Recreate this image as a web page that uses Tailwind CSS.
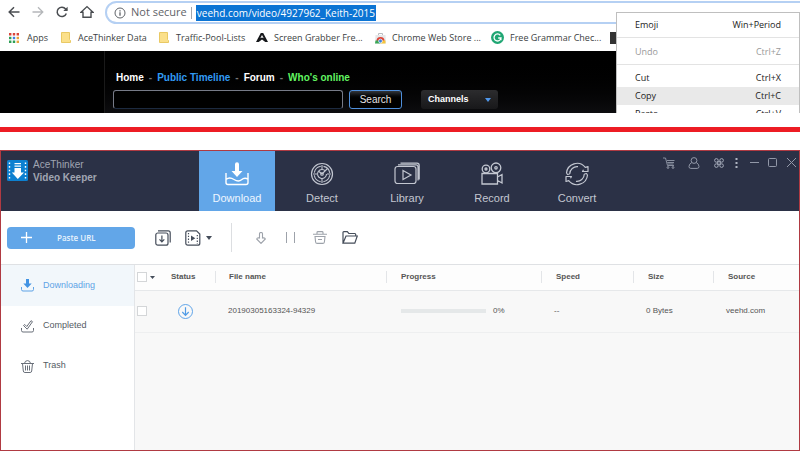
<!DOCTYPE html>
<html lang="en">
  <head>
    <meta charset="UTF-8" />
    <meta name="viewport" content="width=device-width, initial-scale=1.0" />
    <title>AceThinker Video Keeper</title>
    <script src="https://cdn.jsdelivr.net/npm/@tailwindcss/browser@4"></script>
  </head>
  <body class="flex min-h-screen flex-col bg-white font-['Liberation_Sans',sans-serif]">
    <!-- Browser -->
    <section class="relative overflow-hidden font-['Open_Sans',sans-serif]">
      <!-- Address row -->
      <div class="flex h-6 items-center overflow-hidden text-[#5f6368]">
        <div class="flex w-[105px] shrink-0 items-center gap-3 pl-2">
          <button aria-label="Back">
            <svg class="size-3" viewBox="0 0 12 12" fill="none" stroke="#4a4d51" stroke-width="1.5"><path d="M11.5 6H1.5M6 1.2L1.2 6 6 10.8" /></svg>
          </button>
          <button aria-label="Forward">
            <svg class="size-3" viewBox="0 0 12 12" fill="none" stroke="#b5b7ba" stroke-width="1.3"><path d="M.5 6h10M6 1.2L10.8 6 6 10.8" /></svg>
          </button>
          <button aria-label="Reload">
            <svg class="size-3" viewBox="0 0 12 12" fill="none" stroke="#4a4d51" stroke-width="1.5"><path d="M10.3 7.5A4.7 4.7 0 1 1 9.6 3L11 4.4" /><path d="M11.6 .8v4.3H7.3z" fill="#4a4d51" stroke="none" /></svg>
          </button>
          <button aria-label="Home">
            <svg class="size-3.5" viewBox="0 0 14 14" fill="none" stroke="#4a4d51" stroke-width="1.4"><path d="M1 7.3L7 1.6l6 5.7H11v5H3v-5z" /></svg>
          </button>
        </div>
        <div class="-mr-4 mt-px flex h-[23px] flex-1 items-center rounded-full border-2 border-[#b5d0f3] pl-[7px]">
          <svg class="size-3" viewBox="0 0 12 12" fill="none" stroke="#5f6368"><circle cx="6" cy="6" r="5" /><path d="M6 5.3v3.4M6 3.2v1.2" stroke-width="1.3" /></svg>
          <span class="ml-[5px] text-[11px]">Not secure</span>
          <span class="mx-1 h-3 w-px bg-[#a5a8ac]"></span>
          <a href="#" class="bg-[#0b74d4] px-px text-[10px] leading-4 text-white">veehd.com/video/4927962_Keith-2015</a>
        </div>
      </div>

      <!-- Bookmarks -->
      <nav class="flex h-[27px] items-center overflow-hidden whitespace-nowrap text-[9px] text-[#3c3f43]">
        <a href="#" class="flex w-[52px] shrink-0 items-center gap-2 pl-[9px]">
          <svg class="size-[10px] shrink-0" viewBox="0 0 10 10"><path d="M0 0h2.4v2.4H0zM3.8 0h2.4v2.4H3.8zM7.6 0H10v2.4H7.6z" fill="#d9453b" /><path d="M0 3.8h2.4v2.4H0z" fill="#2e9f56" /><path d="M3.8 3.8h2.4v2.4H3.8z" fill="#3f7fe0" /><path d="M7.6 3.8H10v2.4H7.6z" fill="#e8a33b" /><path d="M0 7.6h2.4V10H0zM3.8 7.6h2.4V10H3.8z" fill="#2e9f56" /><path d="M7.6 7.6H10V10H7.6z" fill="#e8a33b" /></svg>
          Apps
        </a>
        <a href="#" class="ml-[9px] flex w-[98px] shrink-0 items-center gap-[7px]">
          <svg class="h-[11px] w-[10px] shrink-0" viewBox="0 0 10 11"><path d="M.5.5h8v7l1 1v2H.5z" fill="#fbe08b" stroke="#e9c964" /></svg>
          AceThinker Data
        </a>
        <a href="#" class="flex w-[97px] shrink-0 items-center gap-[7px]">
          <svg class="h-[11px] w-[10px] shrink-0" viewBox="0 0 10 11"><path d="M.5.5h8v7l1 1v2H.5z" fill="#fbe08b" stroke="#e9c964" /></svg>
          Traffic-Pool-Lists
        </a>
        <a href="#" class="flex w-[119px] shrink-0 items-center gap-[6px]">
          <svg class="h-[9px] w-3 shrink-0" viewBox="0 0 12 9"><path d="M4.800 0h2.400L12 9H9.300L6 6.500 2.700 9H0zM6 2L4.300 5.300 6 4.400l1.700.9z" fill="#16181b" fill-rule="evenodd" /></svg>
          Screen Grabber Fre...
        </a>
        <a href="#" class="flex w-[116px] shrink-0 items-center gap-[6px]">
          <svg class="h-3 w-[11px] shrink-0" viewBox="0 0 11 12"><path d="M3.5 3V1.5h4V3" fill="none" stroke="#b9bcc0" /><path d="M.5 3h10l.5 8.5H0z" fill="#e6e7e9" /><path d="M1.5 9a4 4 0 0 1 8 0z" fill="#dc4437" /><path d="M.5 8.5h5v3H0z" fill="#3aa757" /><path d="M5.5 8.5h5v3h-5z" fill="#f5c63c" /><circle cx="5.5" cy="9" r="1.9" fill="#3d7de0" stroke="#fff" stroke-width=".7" /></svg>
          Chrome Web Store ...
        </a>
        <a href="#" class="flex w-[119px] shrink-0 items-center gap-[6px]">
          <svg class="size-[13px] shrink-0" viewBox="0 0 13 13"><circle cx="6.5" cy="6.5" r="6.5" fill="#1fa673" /><path d="M9.3 4.3A3.5 3.5 0 1 0 10 7H7.2M9.9 7v2.3" fill="none" stroke="#fff" stroke-width="1.3" /></svg>
          Free Grammar Chec...
        </a>
        <span class="h-3 w-3 shrink-0 bg-[#333]"></span>
      </nav>

      <!-- Web page -->
      <div class="flex bg-black font-['Liberation_Sans',sans-serif]">
        <div class="w-[104px] shrink-0"></div>
        <div class="flex h-[62px] flex-1 flex-col gap-[6px] border-l border-[#1a1a1a] bg-linear-to-b from-black to-[#0d0d0f] pt-[21px] pl-2">
          <nav class="flex gap-[5px] pl-[3px] text-[10px] leading-3 font-bold text-[#777]">
            <a href="#" class="text-white">Home</a> -
            <a href="#" class="text-[#319bf5]">Public Timeline</a> -
            <a href="#" class="text-white">Forum</a> -
            <a href="#" class="text-[#62f562]">Who's online</a>
          </nav>
          <form class="flex items-center">
            <input type="text" aria-label="Search videos" class="h-[19px] w-[230px] rounded-[3px] border border-[#777b88] border-b-[#1c2a40] bg-black px-1 text-[10px] text-white" />
            <button type="button" class="ml-[6px] h-[19px] w-[53px] rounded-[3px] border border-[#4f8fdb] bg-linear-to-b from-[#33363b] via-black to-black text-[10px] text-[#e5e5e5]">Search</button>
            <button type="button" class="ml-[19px] flex h-[19px] w-[77px] items-center justify-between rounded-[3px] bg-linear-to-b from-[#2c2c2e] to-[#18181a] px-[7px] text-[9px] font-bold text-white">
              Channels
              <svg class="h-1 w-[6px]" viewBox="0 0 6 4"><path d="M0 0h6L3 4z" fill="#4f97ec" /></svg>
            </button>
          </form>
        </div>
      </div>

      <!-- Context menu -->
      <div class="absolute top-3 right-0 bottom-0 w-[184px] overflow-hidden border border-b-0 border-[#bfbfbf] bg-white pt-[3px] text-[9px] leading-[18px] text-[#222]">
        <button class="flex w-full justify-between px-[18px]"><span>Emoji</span><span>Win+Period</span></button>
        <hr class="mt-[3px] mb-[5px] border-[#e3e3e3]" />
        <button class="flex w-full justify-between px-[18px] text-[#999]" disabled><span>Undo</span><span>Ctrl+Z</span></button>
        <hr class="mt-[3px] mb-1 border-[#e3e3e3]" />
        <button class="flex w-full justify-between px-[18px]"><span>Cut</span><span>Ctrl+X</span></button>
        <button class="flex w-full justify-between bg-[#e9e9e9] px-[18px]"><span>Copy</span><span>Ctrl+C</span></button>
        <button class="flex w-full justify-between px-[18px]"><span>Paste</span><span>Ctrl+V</span></button>
      </div>
    </section>

    <div class="mt-[14px] mb-[18px] h-[5px] bg-[#ed1c24]"></div>

    <!-- Video Keeper -->
    <main class="mb-px flex flex-1 flex-col border border-[#b03a42]">
      <header class="flex h-[60px] bg-[#2b3146]">
        <div class="flex w-[198px] shrink-0 gap-[5px] pt-[7px] pl-[6px]">
          <svg class="mt-[2px] size-[21px]" viewBox="0 0 21 21"><rect width="21" height="21" rx="1.5" fill="#0d80d0" /><path d="M2.5 2.5v17M18.5 2.5v17" stroke="#fff" stroke-width="1.4" stroke-dasharray="1.6 2" /><path d="M7.500 3h6.500v1.300h-6.500zM7.500 5.500h6.500v1.300h-6.500zM7.500 8h6.500v4.500h3L10.800 19 4.800 12.500h2.700z" fill="#fff" /></svg>
          <div class="text-[10px] leading-[13px] text-[#a0a5b2]">
            <p>AceThinker</p>
            <p class="font-bold">Video Keeper</p>
          </div>
        </div>
        <nav class="flex gap-[9px] text-[11px] leading-[13px] text-[#c3c7d1]">
          <a href="#" class="flex w-[76px] flex-col items-center gap-[6px] bg-[#62a6e8] pt-[11px] text-[#eef6ff]">
            <svg class="h-6 w-6" viewBox="0 0 24 24" fill="none" stroke="#fff" stroke-width="1.4"><path d="M10 2.200a2 2 0 0 1 4 0V9h3.500L12 15 6.500 9H10z" fill="#fff" stroke="none" /><path d="M1 11v9.500q0 2 2 2h18q2 0 2-2V11M1 17.500q3.500-3 8 0t7.500.3 6.500-.6" /></svg>
            Download
          </a>
          <a href="#" class="flex w-[76px] flex-col items-center gap-[6px] pt-[11px]">
            <svg class="h-6 w-6" viewBox="0 0 24 24" fill="none" stroke="#c3c7d1" stroke-width="1.100"><circle cx="12" cy="12" r="10.500" stroke-width="1.200" /><circle cx="12" cy="12" r="7.800" stroke-dasharray="9.500 2.750" stroke-dashoffset="-1.300" /><path d="M15.500 9.200A4.500 4.500 0 1 0 16.500 12M12 3v4M12 17v4M3 12h4M17 12h4M12 12l5.500-5.500M9 9.500l3 2.500" /><circle cx="12" cy="12" r="1.300" /></svg>
            Detect
          </a>
          <a href="#" class="flex w-[76px] flex-col items-center gap-[6px] pt-[11px]">
            <svg class="h-6 w-[26px]" viewBox="0 0 26 24" fill="none" stroke="#c3c7d1" stroke-width="1.200"><rect x="1" y="4.500" width="21" height="17" rx="2.500" /><path d="M4 2.800h18q2 0 2 2V18.500M6.500 1.200H23q2.200 0 2.200 2.200v14M9 8.500v9l8-4.500z" /></svg>
            Library
          </a>
          <a href="#" class="flex w-[76px] flex-col items-center gap-[6px] pt-[11px]">
            <svg class="h-6 w-6" viewBox="0 0 24 24" fill="none" stroke="#c3c7d1" stroke-width="1.300"><circle cx="6" cy="7" r="3.800" /><circle cx="16" cy="5.800" r="4.800" /><circle cx="6" cy="7" r="1" /><circle cx="16" cy="5.800" r="1.200" /><path d="M2 11.500h15.500v10.500H2zM17.500 15l4.500-2.500v8.500l-4.500-2.500" /></svg>
            Record
          </a>
          <a href="#" class="flex w-[76px] flex-col items-center gap-[6px] pt-[11px]">
            <svg class="h-6 w-6" viewBox="0 0 24 24" fill="none" stroke="#c3c7d1" stroke-width="1.200" stroke-linejoin="round"><path d="M1.500 11A10.600 10.600 0 0 1 20.300 5.300L23 4.500v5h-5.500l1-1.800" /><path d="M22.500 13A10.600 10.600 0 0 1 3.700 18.700L1 19.500v-5h5.500l-1 1.800" /><path d="M4.700 12A7.400 7.400 0 0 1 13 4.700M19.300 12A7.400 7.400 0 0 1 11 19.300M1.500 11l1 1.500 2.200-.5M22.500 13l-1-1.500-2.200.5" /></svg>
            Convert
          </a>
        </nav>
        <div class="ml-auto flex h-[23px] items-center pr-[2px]">
          <button aria-label="Cart" class="w-[25px]"><svg class="size-3" viewBox="0 0 12 12" fill="none" stroke="#9298a8"><path d="M0 1h2.500l2 7.500H11M4 3.500h7.500M4.300 5.500H11M4.800 7h5.700" stroke-width=".9" /><circle cx="5" cy="10.500" r=".9" /><circle cx="10" cy="10.500" r=".9" /></svg></button>
          <button aria-label="Account" class="w-[26px]"><svg class="size-3" viewBox="0 0 12 12" fill="none" stroke="#9298a8"><circle cx="6" cy="3.500" r="2.900" /><path d="M3.800 5.500Q1 7 1 9.500 1 11.400 2.800 11.400h6.400Q11 11.400 11 9.500 11 7 8.200 5.500" /></svg></button>
          <button aria-label="Skin" class="w-[21px]"><svg class="size-[10px]" viewBox="0 0 10 10" fill="none" stroke="#a3a9b8"><path d="M3.700 3.700h2.600v2.600H3.700z" /><circle cx="2.400" cy="2.400" r="1.800" /><circle cx="7.600" cy="2.400" r="1.800" /><circle cx="2.400" cy="7.600" r="1.800" /><circle cx="7.600" cy="7.600" r="1.800" /></svg></button>
          <button aria-label="More" class="w-[15px]"><svg class="h-[10px] w-[3px]" viewBox="0 0 3 10" fill="#b0b5c2"><path d="M.5 0h2v2h-2zM.5 4h2v2h-2zM.5 8h2v2h-2z" /></svg></button>
          <button aria-label="Minimize" class="w-[18px]"><svg class="h-[9px] w-[9px]" viewBox="0 0 9 9" stroke="#9298a8"><path d="M0 4.500h9" /></svg></button>
          <button aria-label="Maximize" class="w-[19px]"><svg class="size-[9px]" viewBox="0 0 9 9" fill="none" stroke="#9298a8"><rect x=".5" y=".5" width="8" height="8" rx="1" /></svg></button>
          <button aria-label="Close" class="w-[10px]"><svg class="size-[9px]" viewBox="0 0 9 9" stroke="#9298a8"><path d="M0 0l9 9M9 0L0 9" /></svg></button>
        </div>
      </header>

      <!-- Toolbar -->
      <div class="flex h-[54px] items-center border-b border-[#dfe1e4] pl-[6px]">
        <button class="flex h-[22px] w-32 items-center rounded-[4px] bg-[#62a6e8] pl-[14px] font-['Open_Sans',sans-serif] text-[8px] font-semibold text-[#e6f2fd]">
          <svg class="mr-[25px] size-[11px]" viewBox="0 0 11 11" stroke="#fff" stroke-width="1.300"><path d="M5.500 0v11M0 5.500h11" /></svg>
          Paste URL
        </button>
        <button aria-label="Batch download" class="ml-5"><svg class="size-4" viewBox="0 0 16 16" fill="none" stroke="#454d5a" stroke-width="1.200"><rect x=".8" y="3" width="12.200" height="12.200" rx="2" /><path d="M3 .8h10.200q2 0 2 2V12.500M6.900 5.500v6M4.500 9.300l2.400 2.500 2.400-2.500" /></svg></button>
        <button aria-label="Convert options" class="ml-[14px] flex items-center gap-[5px]">
          <svg class="size-4" viewBox="0 0 16 16" fill="none" stroke="#454d5a" stroke-width="1.200"><path d="M2.800.8h8.700l3.300 3.300v9.100q0 2-2 2H2.800q-2 0-2-2V2.800q0-2 2-2z" /><path d="M3.500 3v11M12.300 5v9" stroke-dasharray="1.300 1.500" /><path d="M6 5.500v5.500l4.300-2.800z" fill="#454d5a" stroke="none" /></svg>
          <svg class="h-1 w-[6px]" viewBox="0 0 6 4"><path d="M0 0h6L3 4z" fill="#454d5a" /></svg>
        </button>
        <span class="mx-[19px] h-[29px] w-px bg-[#dcdee1]"></span>
        <button aria-label="Start" class="ml-[5px]"><svg class="h-3 w-[10px]" viewBox="0 0 10 12" fill="none" stroke="#9da2aa" stroke-width="1.100"><path d="M3.500 6V1.800q0-1.300 1.500-1.300t1.500 1.300V6Q9 5.500 9.300 7L5 11.400.7 7Q1 5.500 3.500 6z" /></svg></button>
        <button aria-label="Pause" class="ml-5"><svg class="h-[11px] w-[9px]" viewBox="0 0 9 11" stroke="#9da2aa"><path d="M.5 0v11M8.500 0v11" /></svg></button>
        <button aria-label="Delete" class="ml-[18px]"><svg class="h-[13px] w-[14px]" viewBox="0 0 14 13" fill="none" stroke="#9da2aa" stroke-width="1.100"><path d="M0 3.200h14M4 3V1.500Q4 .6 5 .6h4q1 0 1 .9V3M2 5.500l.6 5.500q.2 1.400 1.600 1.400h5.600q1.400 0 1.600-1.400L12 5.500zM5 8.500h4" /></svg></button>
        <button aria-label="Open folder" class="ml-[15px]"><svg class="h-[13px] w-4" viewBox="0 0 16 13" fill="none" stroke="#454d5a" stroke-width="1.200"><path d="M1 12V1.500Q1 .7 1.800.7h3.500l1.500 1.800h6q.9 0 .9.9V5M1 12.200L4 5h11.300l-2.500 7.200z" /></svg></button>
      </div>

      <div class="flex flex-1">
        <!-- Sidebar -->
        <aside class="w-[134px] shrink-0 border-r border-[#e3e5e8] text-[9px] text-[#555b64]">
          <a href="#" class="flex h-[41px] items-center gap-[9px] bg-[#f2f7fb] pl-5 text-[#5fa3e6]">
            <svg class="size-[13px]" viewBox="0 0 13 13"><path d="M5 0h3v4.500h2.700L6.500 9 2.300 4.500H5z" fill="#4293e3" /><path d="M.5 8v2.500q0 1.500 1.500 1.500h9q1.500 0 1.500-1.500V8" fill="none" stroke="#5fa3e6" /></svg>
            Downloading
          </a>
          <a href="#" class="flex h-10 items-center gap-[9px] pl-5">
            <svg class="size-[13px]" viewBox="0 0 13 13" fill="none" stroke="#6a707a"><path d="M.5 8v2.500q0 1.500 1.500 1.500h9q1.500 0 1.500-1.500V8" /><path d="M2.500 5.500l1.300-1 2 2L10 .7l1.500 1L6.200 9.200z" /></svg>
            Completed
          </a>
          <a href="#" class="flex h-10 items-center gap-[9px] pl-5">
            <svg class="size-[13px]" viewBox="0 0 13 13" fill="none" stroke="#6a707a"><path d="M0 3.500h13M3.500 3.300Q4 .6 6.500.6T9.500 3.300M1.500 3.500l.8 7.500q.2 1.500 1.600 1.500h5.200q1.400 0 1.600-1.500l.8-7.500M4.500 5.500v5M6.500 5.500v5M8.500 5.500v5" /></svg>
            Trash
          </a>
        </aside>

        <!-- Downloads -->
        <div class="flex-1 bg-[#f8f8f8]">
          <table class="w-full table-fixed text-left text-[8px] text-[#555]">
            <thead>
              <tr class="h-[25px] border-b border-[#e6e8ea] bg-[#fdfdfd] font-bold text-[#555]">
                <th class="w-[36px] pl-[2px]">
                  <div class="flex items-center gap-[3px]">
                    <input type="checkbox" aria-label="Select all" class="size-[10px] appearance-none border border-[#d4d6d8] bg-white" />
                    <svg class="h-[3px] w-[5px]" viewBox="0 0 5 3"><path d="M0 0h5L2.500 3z" fill="#454d5a" /></svg>
                  </div>
                </th>
                <th class="w-[44px]">Status</th>
                <th class="w-[171px]"><div class="border-l border-[#e3e5e8] pl-[13px]">File name</div></th>
                <th class="w-[155px]"><div class="border-l border-[#e3e5e8] pl-[14px]">Progress</div></th>
                <th class="w-[92px]"><div class="border-l border-[#e3e5e8] pl-[14px]">Speed</div></th>
                <th class="w-[80px]"><div class="border-l border-[#e3e5e8] pl-[14px]">Size</div></th>
                <th><div class="border-l border-[#e3e5e8] pl-[14px]">Source</div></th>
              </tr>
            </thead>
            <tbody>
              <tr class="h-[42px] border-b border-[#eeeff0]">
                <td class="pl-[2px]"><input type="checkbox" aria-label="Select 20190305163324-94329" class="block size-[10px] appearance-none border border-[#d4d6d8] bg-white" /></td>
                <td class="pl-[7px]">
                  <svg class="size-[15px]" viewBox="0 0 15 15" fill="none" stroke="#4f9be6"><circle cx="7.500" cy="7.500" r="7" stroke-width=".9" /><path d="M7.500 3.300v8M4.300 8l3.200 3.300L10.700 8" stroke-width="1.200" /></svg>
                </td>
                <td class="pl-[13px]">20190305163324-94329</td>
                <td class="pl-[15px]">
                  <div class="flex items-center gap-[7px]"><div class="h-1 w-[85px] bg-[#e5e8e9]" role="progressbar" aria-label="Progress" aria-valuenow="0" aria-valuemin="0" aria-valuemax="100"></div>0%</div>
                </td>
                <td class="pl-[13px]">--</td>
                <td class="pl-[13px]">0 Bytes</td>
                <td class="pl-[13px]">veehd.com</td>
              </tr>
            </tbody>
          </table>
        </div>
      </div>
    </main>
  </body>
</html>
